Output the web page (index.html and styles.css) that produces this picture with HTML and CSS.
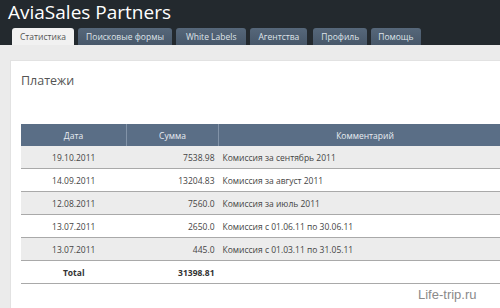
FILE: index.html
```html
<!DOCTYPE html>
<html>
<head>
<meta charset="utf-8">
<link rel="stylesheet" href="styles.css">
</head>
<body>
<div class="header">
  <div class="title">AviaSales Partners</div>
  <div class="tabs">
    <div class="tab active">Статистика</div>
    <div class="tab">Поисковые формы</div>
    <div class="tab tab-wide">White Labels</div>
    <div class="tab tab-gap">Агентства</div>
    <div class="tab">Профиль</div>
    <div class="tab tab-narrow">Помощь</div>
  </div>
</div>
<div class="main">
  <div class="panel">
    <h2 class="heading">Платежи</h2>
    <table class="payments">
      <thead>
        <tr><th class="c-date">Дата</th><th class="c-sum">Сумма</th><th class="c-comment">Комментарий</th></tr>
      </thead>
      <tbody>
        <tr class="odd"><td class="date">19.10.2011</td><td class="sum">7538.98</td><td class="comment">Комиссия за сентябрь 2011</td></tr>
        <tr><td class="date">14.09.2011</td><td class="sum">13204.83</td><td class="comment">Комиссия за август 2011</td></tr>
        <tr class="odd"><td class="date">12.08.2011</td><td class="sum">7560.0</td><td class="comment">Комиссия за июль 2011</td></tr>
        <tr><td class="date">13.07.2011</td><td class="sum">2650.0</td><td class="comment">Комиссия с 01.06.11 по 30.06.11</td></tr>
        <tr class="odd"><td class="date">13.07.2011</td><td class="sum">445.0</td><td class="comment">Комиссия с 01.03.11 по 31.05.11</td></tr>
        <tr class="total"><td class="date">Total</td><td class="sum">31398.81</td><td class="comment"></td></tr>
      </tbody>
    </table>
  </div>
</div>
<div class="watermark">Life-trip.ru</div>
</body>
</html>
```
FILE: styles.css
```css
html, body {
  margin: 0;
  padding: 0;
  width: 500px;
  height: 308px;
  overflow: hidden;
  background: #ebebeb;
  font-family: "Open Sans", "DejaVu Sans", sans-serif;
}
.header {
  background: #23292e;
  height: 45px;
  display: flex;
  flex-direction: column;
  justify-content: space-between;
}
.title {
  color: #ffffff;
  font-size: 19px;
  line-height: 25px;
  padding: 0 0 0 8px;
  white-space: nowrap;
}
.tabs {
  display: flex;
  gap: 4px;
  padding-left: 12px;
  align-items: flex-end;
}
.tab {
  height: 17px;
  line-height: 17px;
  padding: 0 8px;
  font-size: 8.5px;
  color: #dfe4ea;
  background: linear-gradient(#56677a, #475769);
  border-radius: 3px 3px 0 0;
  white-space: nowrap;
}
.tab.tab-wide {
  padding: 0 10px;
}
.tab.tab-gap {
  margin-right: 2px;
}
.tab.tab-narrow {
  padding: 0 7px;
}
.tab.active {
  background: #f1f1f1;
  color: #555555;
}
.main {
  padding: 15px 0 0 10px;
  height: 248px;
}
.panel {
  background: #ffffff;
  height: 100%;
  padding-left: 10px;
  border-left: 1px solid #e2e2e2;
  border-top: 1px solid #e2e2e2;
  box-sizing: border-box;
  overflow: hidden;
}
.heading {
  margin: 0;
  padding: 11px 0 0 0;
  font-size: 12.5px;
  font-weight: normal;
  line-height: 18px;
  color: #555555;
  height: 63px;
  box-sizing: border-box;
}
.payments {
  border-collapse: collapse;
  width: 490px;
  font-size: 8.5px;
  color: #444444;
}
.payments th {
  background: #5a6e86;
  color: #e8edf2;
  font-weight: normal;
  height: 22px;
  padding: 0;
  border-left: 1px solid #8293a8;
}
.payments th:first-child {
  border-left: none;
}
.c-date { width: 105px; }
.c-sum { width: 91px; }
.payments td {
  height: 22px;
  padding: 0;
  border-bottom: 1px solid #a9a9a9;
}
.payments tr.odd td {
  background: #ececec;
}
.payments td.date {
  text-align: center;
}
.payments td.sum {
  text-align: right;
  padding-right: 4px;
}
.payments td.comment {
  padding-left: 4px;
}
.payments tr.total td {
  font-weight: bold;
  color: #333333;
}
.watermark {
  position: absolute;
  left: 418px;
  top: 287px;
  font-family: "Liberation Sans", Arial, sans-serif;
  font-size: 13px;
  color: #8a8a8a;
}
```
